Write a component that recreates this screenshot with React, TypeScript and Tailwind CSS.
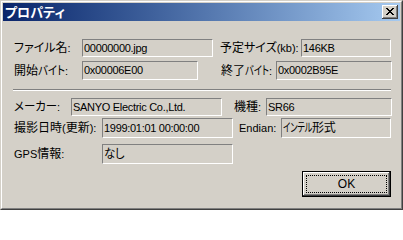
import { useLayoutEffect, useRef, useState, type ReactNode } from "react";

// Japanese runs are drawn 1px larger than the Latin ones, like MS UI Gothic.
function T({ s }: { s: string }) {
  const parts = s.split(/([^\x00-\x7f]+)/);
  return (
    <>
      {parts.map((p, i) =>
        i % 2 ? (
          <span key={i} className="text-[12px]">
            {p}
          </span>
        ) : (
          p
        ),
      )}
    </>
  );
}

/** Squeeze a run of kana into a given width (MS UI Gothic kana are narrow). */
function Fit({ w, children }: { w: number; children: ReactNode }) {
  const inner = useRef<HTMLSpanElement>(null);
  const [k, setK] = useState(1);
  useLayoutEffect(() => {
    const nat = inner.current?.offsetWidth ?? w;
    setK(Math.min(1, w / nat));
  }, [w]);
  return (
    <span className="inline-block whitespace-nowrap text-[12px] align-baseline" style={{ width: w }}>
      <span ref={inner} className="inline-block origin-left" style={{ transform: `scaleX(${k})` }}>
        {children}
      </span>
    </span>
  );
}

function Field({ children, className }: { children: ReactNode; className: string }) {
  return (
    <div
      className={`flex items-center border-t border-l border-t-[#808080] border-l-[#808080] border-r border-b border-r-white border-b-white bg-[#d4d0c8] pl-[1px] whitespace-nowrap overflow-hidden tracking-[-0.3px] ${className}`}
    >
      {children}
    </div>
  );
}

function Label({ children, className }: { children: ReactNode; className: string }) {
  return <div className={`shrink-0 whitespace-nowrap ${className}`}>{children}</div>;
}

function Row({ className, children }: { className: string; children: ReactNode }) {
  return <div className={`flex items-center pl-[11px] ${className}`}>{children}</div>;
}

function CloseGlyph() {
  const px = [
    [0, 0], [1, 0], [6, 0], [7, 0],
    [1, 1], [2, 1], [5, 1], [6, 1],
    [2, 2], [3, 2], [4, 2], [5, 2],
    [3, 3], [4, 3],
    [2, 4], [3, 4], [4, 4], [5, 4],
    [1, 5], [2, 5], [5, 5], [6, 5],
    [0, 6], [1, 6], [6, 6], [7, 6],
  ];
  return (
    <svg width="8" height="7" viewBox="0 0 8 7" shapeRendering="crispEdges">
      {px.map(([x, y]) => (
        <rect key={`${x}-${y}`} x={x} y={y} width="1" height="1" fill="#000" />
      ))}
    </svg>
  );
}

export default function App() {
  return (
    <div className="w-[403px] h-[210px] border border-t-[#d4d0c8] border-l-[#d4d0c8] border-r-[#404040] border-b-[#404040] font-['Liberation_Sans','Noto_Sans_CJK_JP',sans-serif] text-[11px] leading-none text-black [font-feature-settings:'palt']">
      <div className="h-full border border-t-white border-l-white border-r-[#808080] border-b-[#808080] bg-[#d4d0c8] p-px flex flex-col">
        {/* title bar */}
        <div className="h-[18px] shrink-0 flex items-center justify-between pl-[2px] pr-[2px] bg-gradient-to-r from-[#0a246a] to-[#a6caf0]">
          <span className="text-[13px] font-bold text-white">プロパティ</span>
          <button
            type="button"
            className="w-[16px] h-[14px] flex items-center justify-center pb-px pr-px bg-[#d4d0c8] shadow-[inset_-1px_-1px_#404040,inset_1px_1px_#fff,inset_-2px_-2px_#808080]"
          >
            <CloseGlyph />
          </button>
        </div>

        {/* body */}
        <div className="flex-1 flex flex-col pt-[18px]">
          <Row className="h-[18px]">
            <Label className="w-[68px]">
              <T s="ファイル名:" />
            </Label>
            <Field className="w-[131px] h-[18px]">00000000.jpg</Field>
            <Label className="ml-[7px] w-[81px]">
              <T s="予定サイズ(kb):" />
            </Label>
            <Field className="w-[90px] h-[18px]">146KB</Field>
          </Row>
          <Row className="mt-[4px] h-[19px]">
            <Label className="w-[68px]">
              <span className="text-[12px]">開始</span>
              <Fit w={27}>バイト</Fit>:
            </Label>
            <Field className="w-[116px] h-[19px]">0x00006E00</Field>
            <Label className="ml-[23px] w-[55px]">
              <span className="text-[12px]">終了</span>
              <Fit w={24}>バイト</Fit>:
            </Label>
            <Field className="w-[116px] h-[19px]">0x0002B95E</Field>
          </Row>

          <div className="mt-[9px] ml-[10px] mr-[9px] border-t border-t-[#808080] border-b border-b-white" />

          <Row className="mt-[7px] h-[18px]">
            <Label className="w-[57px]">
              <Fit w={43}>メーカー</Fit>:
            </Label>
            <Field className="w-[151px] h-[18px]">SANYO Electric Co.,Ltd.</Field>
            <Label className="ml-[12px] w-[32px]">
              <T s="機種:" />
            </Label>
            <Field className="w-[126px] h-[18px]">SR66</Field>
          </Row>
          <Row className="mt-[2px] h-[20px]">
            <Label className="w-[88px]">
              <T s="撮影日時(更新):" />
            </Label>
            <Field className="w-[131px] h-[20px]">1999:01:01 00:00:00</Field>
            <Label className="ml-[6px] w-[42px]">Endian:</Label>
            <Field className="w-[110px] h-[20px]">
              <Fit w={29}>インテル</Fit>
              <span className="text-[12px]">形式</span>
            </Field>
          </Row>
          <Row className="mt-[6px] h-[20px]">
            <Label className="w-[88px]">
              <T s="GPS情報:" />
            </Label>
            <Field className="w-[131px] h-[20px]">
              <Fit w={20}>なし</Fit>
            </Field>
          </Row>

          <div className="mt-[7px] flex justify-end pr-[9px]">
            <button
              type="button"
              className="w-[89px] h-[26px] border border-black bg-[#d4d0c8] shadow-[inset_-1px_-1px_#404040,inset_1px_1px_#fff,inset_-2px_-2px_#808080] p-[3px]"
            >
              <div className="h-full w-full border border-dotted border-black flex items-center justify-center text-[12px]">
                OK
              </div>
            </button>
          </div>
        </div>
      </div>
    </div>
  );
}
